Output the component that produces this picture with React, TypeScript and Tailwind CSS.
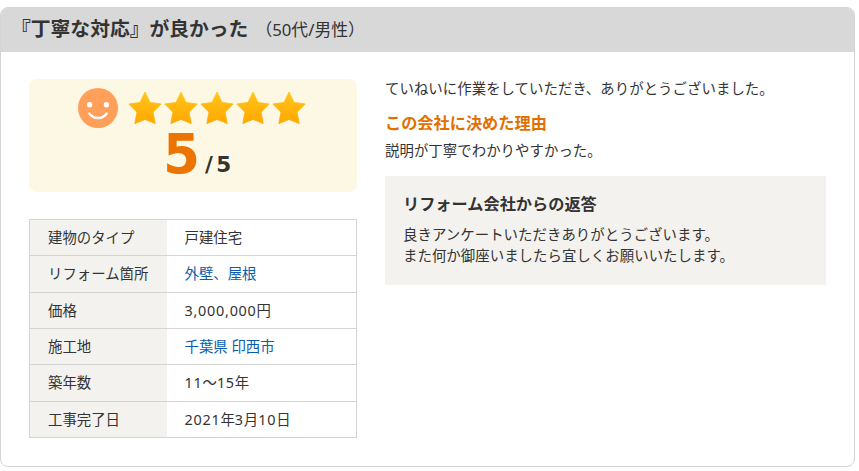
type Row = {
  label: string
  value: string
  links?: string[]
}

const rows: Row[] = [
  { label: "建物のタイプ", value: "戸建住宅" },
  { label: "リフォーム箇所", value: "外壁、屋根", links: ["外壁", "屋根"] },
  { label: "価格", value: "3,000,000円" },
  { label: "施工地", value: "千葉県 印西市", links: ["千葉県 印西市"] },
  { label: "築年数", value: "11～15年" },
  { label: "工事完了日", value: "2021年3月10日" },
]

function Smile() {
  return (
    <svg className="h-10 w-10" viewBox="0 0 40 40" fill="none">
      <circle cx="20" cy="20" r="20" fill="#ff9f59" />
      <circle cx="11.6" cy="16.7" r="2.7" fill="#fff" />
      <circle cx="28.4" cy="16.7" r="2.7" fill="#fff" />
      <path d="M11.3 25.5c4.4 6 13 6 17.4 0" stroke="#fff" strokeWidth="2.3" strokeLinecap="round" />
    </svg>
  )
}

function Star() {
  return (
    <svg className="h-8.5 w-9" viewBox="0 0 36 34">
      <defs>
        <linearGradient id="gold" x1="0" y1="0" x2="0" y2="1">
          <stop offset="0" stopColor="#ffc61a" />
          <stop offset="1" stopColor="#ffa700" />
        </linearGradient>
      </defs>
      <path
        d="M18 1 L23 11.4 L34.2 13 L26.1 21.2 L28.2 32.6 L18 28.4 L7.8 32.6 L9.9 21.2 L1.8 13 L13 11.4 Z"
        fill="url(#gold)"
        stroke="url(#gold)"
        strokeWidth="0.8"
        strokeLinejoin="round"
      />
    </svg>
  )
}

function Rating() {
  return (
    <div className="h-[113px] rounded-lg bg-[#fdf8e3] pt-[9px]">
      <div className="flex justify-center">
        <Smile />
        <div className="mr-[2px] ml-[9px] flex pt-[3px]">
          <Star />
          <Star />
          <Star />
          <Star />
          <Star />
        </div>
      </div>
      <div className="flex items-baseline pl-[134px] font-['DejaVu_Sans'] font-bold">
        <span className="w-[42px] text-[56px] leading-[51px] text-[#eb7500]">
          <span className="inline-block origin-left scale-x-95">5</span>
        </span>
        <span className="-translate-y-px text-[21.5px] leading-[44px] tracking-[3.5px]">/5</span>
      </div>
    </div>
  )
}

// digits are set a little wider than the kana and kanji around them
function Value({ text }: { text: string }) {
  return text.split(/([\d,]+)/).map((part, i) =>
    i % 2 ? (
      <span key={i} className="font-['Noto_Sans'] tracking-[0.75px]">{part}</span>
    ) : (
      part
    )
  )
}

function InfoTable() {
  return (
    <table className="mt-[27px] h-[219px] w-[328px] table-fixed border-collapse border border-[#d4d4d4]">
      <tbody>
        {rows.map((row) => (
          <tr key={row.label} className="border-b border-[#d4d4d4]">
            <th className="w-[137px] bg-[#f3f2ee] pl-[18px] text-left font-normal">{row.label}</th>
            <td className="pl-[18px]">
              {row.links ? (
                row.links.map((link, i) => (
                  <span key={link} className="text-[#0b5cad]">
                    {i > 0 && "、"}
                    <a>{link}</a>
                  </span>
                ))
              ) : (
                <Value text={row.value} />
              )}
            </td>
          </tr>
        ))}
      </tbody>
    </table>
  )
}

export default function App() {
  return (
    <div className="h-[471px] bg-white pt-[7px] font-['Noto_Sans','Noto_Sans_CJK_JP',sans-serif] text-[14.4px] leading-[21px] text-[#333]" lang="ja">
      <article className="h-[460px] w-[855px] overflow-hidden rounded-lg border border-[#d4d4d4]">
        <h2 className="flex h-11 items-center bg-[#d8d8d8] pb-[4px] pl-[10px] text-[19.8px] font-bold whitespace-nowrap">
          『丁寧な対応』が良かった
          <span className="ml-[7px] pt-[2px] text-[16.8px] font-normal">（50代/男性）</span>
        </h2>
        <div className="flex pt-[27px] pl-7">
          <div className="w-[328px]">
            <Rating />
            <InfoTable />
          </div>
          <div className="ml-7 w-[441px]">
            <p className="-mt-px tracking-[0.06px]">ていねいに作業をしていただき、ありがとうございました。</p>
            <h3 className="mt-3 text-[16.2px] leading-6 font-bold text-[#e17000]">この会社に決めた理由</h3>
            <p className="mt-[5px] tracking-[0.06px]">説明が丁寧でわかりやすかった。</p>
            <div className="mt-[15px] h-[109px] bg-[#f3f2ee] px-[18px] pt-4">
              <h4 className="text-[16.2px] leading-6 font-bold">リフォーム会社からの返答</h4>
              <p className="mt-2 tracking-[0.06px]">
                良きアンケートいただきありがとうございます。
                <br />
                また何か御座いましたら宜しくお願いいたします。
              </p>
            </div>
          </div>
        </div>
      </article>
    </div>
  )
}
